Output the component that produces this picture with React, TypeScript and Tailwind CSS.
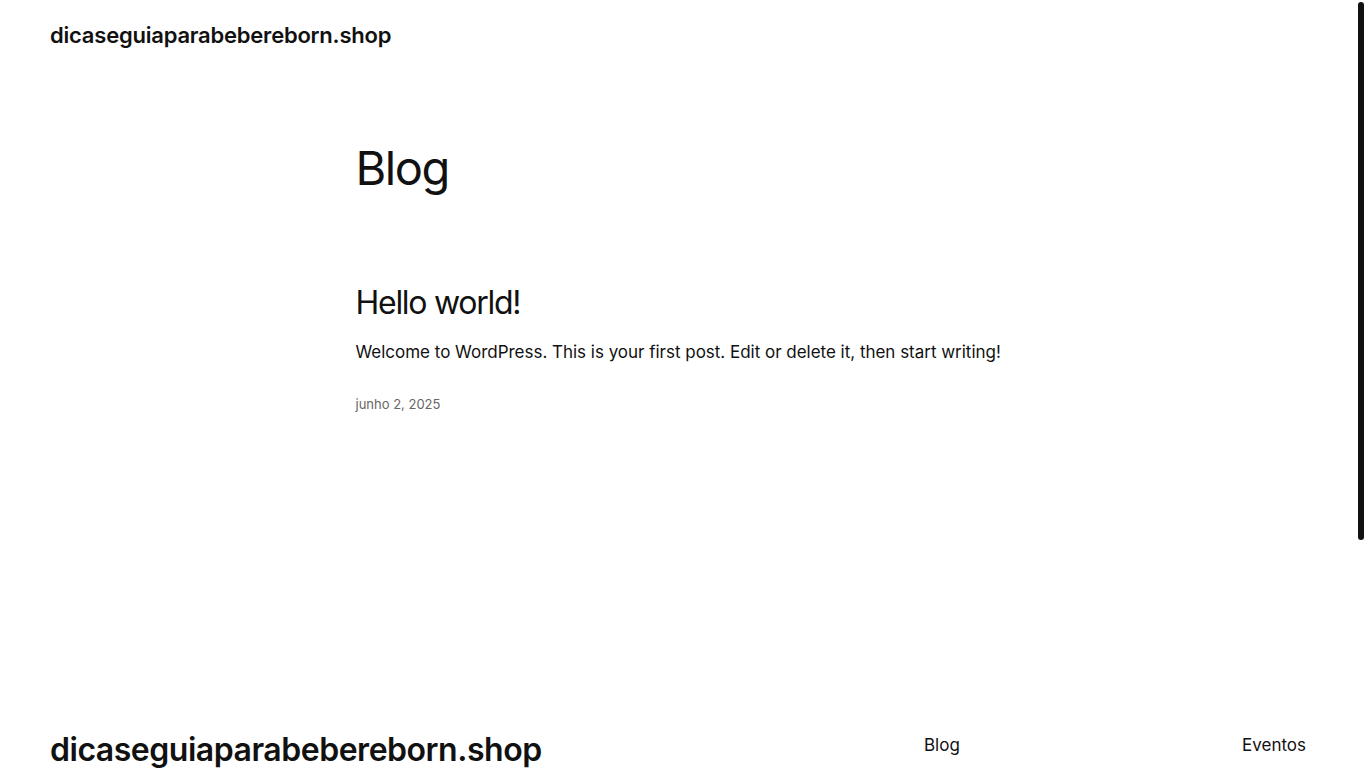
export default function App() {
  return (
    <div className="flex h-screen overflow-hidden bg-white text-[#111111] [font-family:Inter,'Liberation_Sans',sans-serif]">
      <div className="min-w-0 flex-1">
        <header className="px-[50px] pt-[20px] pb-[20px]">
          <a href="#" className="text-[22px] leading-[30px] font-semibold tracking-[-0.01em]">
            dicaseguiaparabebereborn.shop
          </a>
        </header>

        <main className="mx-auto w-[645px]">
          <h1 className="mt-[70px] text-[47px] leading-[1.2] font-normal tracking-[-0.03em]">Blog</h1>

          <article className="mt-[88px]">
            <h2 className="text-[32px] leading-[1.2] font-normal tracking-[-0.04em]">
              <a href="#">Hello world!</a>
            </h2>
            <p className="mt-[16px] whitespace-nowrap text-[17px] leading-[1.6] tracking-[-0.001em]">
              Welcome to WordPress. This is your first post. Edit or delete it, then start writing!
            </p>
            <div className="mt-[27px] text-[13px] leading-[1.7] text-[#666666]">junho 2, 2025</div>
          </article>
        </main>

        <footer className="mt-[316px] px-[50px] pb-[60px]">
          <div className="flex items-start justify-between">
            <a href="#" className="text-[32px] leading-[1.2] font-semibold tracking-[-0.015em]">
              dicaseguiaparabebereborn.shop
            </a>
            <nav className="flex w-[382px] justify-between text-[17px] leading-[1.7]">
              <a href="#">Blog</a>
              <a href="#">Eventos</a>
            </nav>
          </div>
        </footer>
      </div>

      <div className="w-[10px] shrink-0 bg-white px-[2px] pt-[2px]">
        <div className="h-[538px] w-full rounded-full bg-[#111111]" />
      </div>
    </div>
  );
}
